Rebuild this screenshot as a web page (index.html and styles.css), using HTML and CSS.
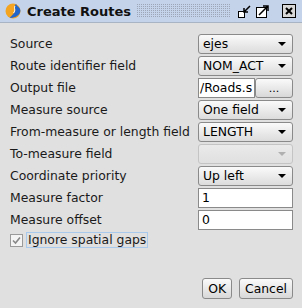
FILE: index.html
```html
<!DOCTYPE html>
<html lang="en">
<head>
    <meta charset="UTF-8">
    <title>Create Routes</title>
    <link rel="stylesheet" href="styles.css">
</head>
<body>
    <div class="window">
        <div class="titlebar">
            <svg class="app-icon" width="16" height="16" viewBox="0 0 16 16">
                <circle cx="8" cy="8" r="7.5" fill="#f2a422"/>
                <path d="M11 1 C8 3.5 12 6 9.5 9.5 C8.5 11 6.5 13 4.5 14.8 C9.5 15.5 15.5 12 15.4 7.5 C15.3 4.5 12 3.5 11 1 Z" fill="#2266cc"/>
                <path d="M10 3 C8.5 5.5 11 7 8.5 10" stroke="#fff" stroke-width="1" fill="none"/>
            </svg>
            <span class="title">Create Routes</span>
            <div class="grip"></div>
            <div class="win-buttons">
                <svg width="13" height="13" viewBox="0 0 13 13">
                    <rect x="0.5" y="6.5" width="6" height="6" fill="#fff" stroke="#000"/>
                    <path d="M12 1 L6 7 M6 3 L6 7 L10 7" stroke="#000" stroke-width="1.5" fill="none"/>
                </svg>
                <svg width="13" height="13" viewBox="0 0 13 13">
                    <rect x="0.5" y="2.5" width="10" height="10" fill="#fff" stroke="#000"/>
                    <path d="M3 10 L12 1 M7 1 L12 1 L12 6" stroke="#000" stroke-width="1.5" fill="none"/>
                </svg>
                <svg class="close" width="14" height="14" viewBox="0 0 14 14">
                    <rect x="0.5" y="0.5" width="13" height="13" fill="#d8d8d8" stroke="#000"/>
                    <path d="M4 4 L10 10 M10 4 L4 10" stroke="#000" stroke-width="2"/>
                </svg>
            </div>
        </div>

        <div class="content">
            <div class="form">
                <label>Source</label>
                <div class="combo">ejes</div>

                <label>Route identifier field</label>
                <div class="combo">NOM_ACT</div>

                <label>Output file</label>
                <div class="file-row">
                    <div class="field">/Roads.s</div>
                    <div class="btn small">...</div>
                </div>

                <label>Measure source</label>
                <div class="combo">One field</div>

                <label>From-measure or length field</label>
                <div class="combo">LENGTH</div>

                <label>To-measure field</label>
                <div class="combo disabled"></div>

                <label>Coordinate priority</label>
                <div class="combo">Up left</div>

                <label>Measure factor</label>
                <div class="field">1</div>

                <label>Measure offset</label>
                <div class="field">0</div>
            </div>

            <div class="check-row">
                <span class="checkbox">
                    <svg width="9" height="9" viewBox="0 0 9 9"><path d="M1 4.5 L3.5 7 L8 1.5" stroke="#888" stroke-width="1.6" fill="none"/></svg>
                </span>
                <span class="check-label">Ignore spatial gaps</span>
            </div>

            <div class="actions">
                <div class="btn">OK</div>
                <div class="btn">Cancel</div>
            </div>
        </div>
    </div>
</body>
</html>
```

FILE: styles.css
```css
body {
    margin: 0;
    background: #e0e0e0;
    font-family: "DejaVu Sans", sans-serif;
    font-size: 12.4px;
    color: #1a1a1a;
}
.window {
    width: 302px;
    height: 308px;
    display: flex;
    flex-direction: column;
}
.titlebar {
    height: 22px;
    background: #c4d3ea;
    border-bottom: 1px solid #a8b4c4;
    display: flex;
    align-items: center;
    padding: 0 6px 0 5px;
}
.app-icon {
    flex: none;
}
.title {
    font-weight: bold;
    font-size: 13px;
    color: #111;
    margin-left: 6px;
}
.grip {
    flex: 1;
    height: 14px;
    margin: 0 7px 0 6px;
    background-image: radial-gradient(circle at 0.5px 0.5px, #9ca6b6 0.7px, transparent 0.8px);
    background-size: 2px 2px;
}
.win-buttons {
    display: flex;
    align-items: center;
    gap: 5px;
}
.win-buttons .close {
    margin-left: 8px;
}
.content {
    flex: 1;
    padding: 11px 9px 8px 10px;
    display: flex;
    flex-direction: column;
}
.form {
    display: grid;
    grid-template-columns: 1fr 95px;
    grid-auto-rows: 20px;
    row-gap: 2px;
    align-items: center;
}
.form label {
    line-height: 20px;
    white-space: nowrap;
}
.combo {
    height: 18px;
    border: 1px solid #8a8a8a;
    border-radius: 3px;
    background: linear-gradient(#fafafa, #dcdcdc);
    padding-left: 4px;
    line-height: 18px;
    color: #000;
    position: relative;
}
.combo::after {
    content: '';
    position: absolute;
    right: 6px;
    top: 7px;
    border-left: 4px solid transparent;
    border-right: 4px solid transparent;
    border-top: 4px solid #000;
}
.combo.disabled {
    border-color: #c4c4c4;
    background: linear-gradient(#eaeaea, #e0e0e0);
}
.combo.disabled::after {
    border-top-color: #b0b0b0;
}
.field {
    height: 18px;
    border: 1px solid #8a8a8a;
    background: #fff;
    padding-left: 3px;
    line-height: 18px;
    color: #000;
}
.file-row {
    display: flex;
    height: 20px;
}
.file-row .field {
    width: 54px;
    padding-left: 1px;
    overflow: hidden;
    white-space: nowrap;
}
.btn {
    border: 1px solid #8a8a8a;
    border-radius: 3px;
    background: linear-gradient(#fafafa, #d8d8d8);
    color: #000;
    display: flex;
    align-items: center;
    justify-content: center;
    padding: 0 5px;
    height: 19px;
}
.btn.small {
    flex: 1;
    height: 18px;
    padding: 0;
    font-size: 11px;
}
.check-row {
    display: flex;
    align-items: center;
    margin-top: 2px;
    height: 16px;
}
.checkbox {
    width: 11px;
    height: 11px;
    border: 1px solid #9a9a9a;
    background: #f4f4f4;
    display: flex;
    align-items: center;
    justify-content: center;
    margin-right: 3px;
}
.check-label {
    border: 1px solid #a8c8ec;
    padding: 0 1px;
    line-height: 14px;
}
.actions {
    margin-top: auto;
    display: flex;
    justify-content: flex-end;
    gap: 7px;
    margin-bottom: 1px;
}
```
